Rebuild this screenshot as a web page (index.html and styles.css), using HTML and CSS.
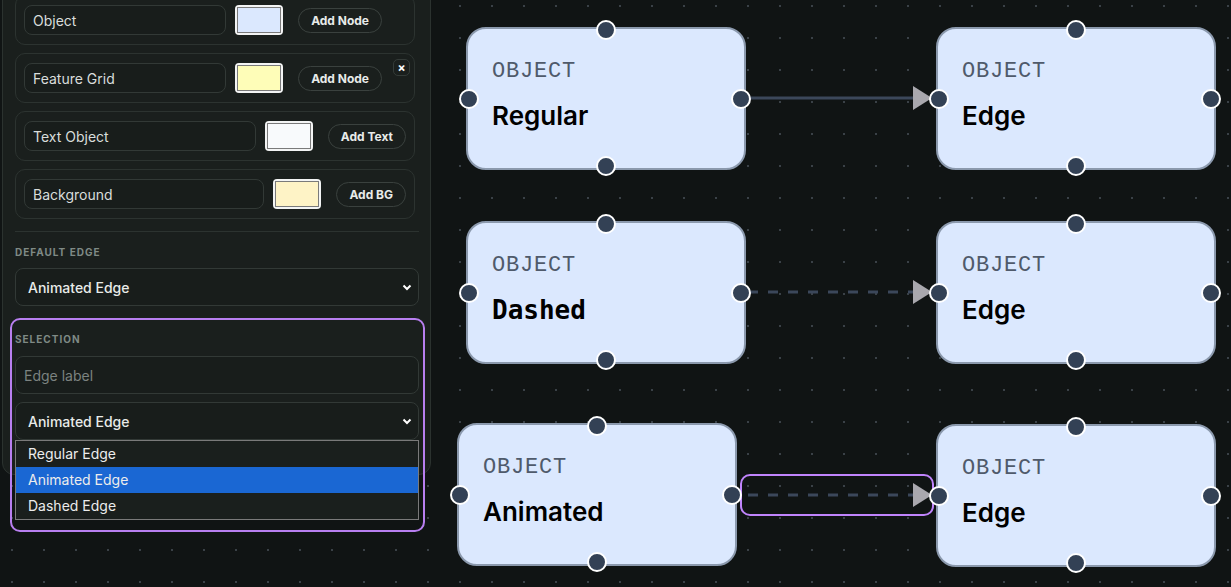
FILE: index.html
```html
<!DOCTYPE html>
<html lang="en">
<head>
    <meta charset="UTF-8">
    <meta name="viewport" content="width=device-width, initial-scale=1.0">
    <title>Flow editor</title>
    <link rel="stylesheet" href="styles.css">
</head>
<body>
    <div class="canvas">
        <svg class="edges" width="1231" height="587" viewBox="0 0 1231 587">
            <!-- regular -->
            <path class="edge" d="M741 98 L916 98"/>
            <polygon class="arrow" points="913,86 932,98 913,110"/>
            <!-- dashed -->
            <path class="edge edge--dashed" d="M748 292 L916 292"/>
            <polygon class="arrow" points="913,280 932,292 913,304"/>
            <!-- animated (selected) -->
            <path class="edge edge--dashed" d="M748 495 L916 495"/>
            <polygon class="arrow" points="913,483 932,495 913,507"/>
            <rect class="edge-selected" x="741" y="475" width="192" height="40" rx="9"/>
        </svg>

        <div class="node n1">
            <div class="node-kind">OBJECT</div>
            <div class="node-title">Regular</div>
            <span class="handle handle--top"></span>
            <span class="handle handle--left"></span>
            <span class="handle handle--right"></span>
            <span class="handle handle--bottom"></span>
        </div>
        <div class="node n2">
            <div class="node-kind">OBJECT</div>
            <div class="node-title">Edge</div>
            <span class="handle handle--top"></span>
            <span class="handle handle--left"></span>
            <span class="handle handle--right"></span>
            <span class="handle handle--bottom"></span>
        </div>
        <div class="node n3">
            <div class="node-kind">OBJECT</div>
            <div class="node-title node-title--mono">Dashed</div>
            <span class="handle handle--top"></span>
            <span class="handle handle--left"></span>
            <span class="handle handle--right"></span>
            <span class="handle handle--bottom"></span>
        </div>
        <div class="node n4">
            <div class="node-kind">OBJECT</div>
            <div class="node-title">Edge</div>
            <span class="handle handle--top"></span>
            <span class="handle handle--left"></span>
            <span class="handle handle--right"></span>
            <span class="handle handle--bottom"></span>
        </div>
        <div class="node n5">
            <div class="node-kind">OBJECT</div>
            <div class="node-title">Animated</div>
            <span class="handle handle--top"></span>
            <span class="handle handle--left"></span>
            <span class="handle handle--right"></span>
            <span class="handle handle--bottom"></span>
        </div>
        <div class="node n6">
            <div class="node-kind">OBJECT</div>
            <div class="node-title">Edge</div>
            <span class="handle handle--top"></span>
            <span class="handle handle--left"></span>
            <span class="handle handle--right"></span>
            <span class="handle handle--bottom"></span>
        </div>

        <aside class="panel">
            <div class="cards">
                <div class="card card--node">
                    <input class="field" type="text" value="Object">
                    <div class="swatch"><span class="swatch-blue"></span></div>
                    <button class="add-btn">Add Node</button>
                </div>
                <div class="card card--node">
                    <input class="field" type="text" value="Feature Grid">
                    <div class="swatch"><span class="swatch-yellow"></span></div>
                    <button class="add-btn">Add Node</button>
                    <button class="close-btn">×</button>
                </div>
                <div class="card">
                    <input class="field" type="text" value="Text Object">
                    <div class="swatch"><span class="swatch-white"></span></div>
                    <button class="add-btn">Add Text</button>
                </div>
                <div class="card">
                    <input class="field" type="text" value="Background">
                    <div class="swatch"><span class="swatch-cream"></span></div>
                    <button class="add-btn">Add BG</button>
                </div>
            </div>

            <div class="divider"></div>

            <div class="section-label">Default edge</div>
            <div class="select">
                <span>Animated Edge</span>
                <svg class="chevron" width="10" height="7" viewBox="0 0 10 7"><path d="M1.5 1.5 L5 5 L8.5 1.5"/></svg>
            </div>

            <div class="selection">
                <div class="section-label">Selection</div>
                <input class="field field--tall" type="text" placeholder="Edge label">
                <div class="select select--spaced">
                    <span>Animated Edge</span>
                    <svg class="chevron" width="10" height="7" viewBox="0 0 10 7"><path d="M1.5 1.5 L5 5 L8.5 1.5"/></svg>
                </div>
                <div class="options">
                    <div class="option">Regular Edge</div>
                    <div class="option option--active">Animated Edge</div>
                    <div class="option">Dashed Edge</div>
                </div>
            </div>
        </aside>
    </div>
</body>
</html>
```

FILE: styles.css
```css
/* Base */
body {
    margin: 0;
    width: 1231px;
    height: 587px;
    overflow: hidden;
    background: #101414;
    font-family: Inter, "Noto Sans", sans-serif;
    color: #e6e9e7;
}

.canvas {
    position: relative;
    width: 1231px;
    height: 587px;
    background-image: radial-gradient(circle, #3a4147 1px, transparent 1.5px);
    background-size: 32px 32px;
    background-position: -4px -10px;
}

/* Edges */
.edges {
    position: absolute;
    left: 0;
    top: 0;
}
.edge {
    fill: none;
    stroke: #3b475a;
    stroke-width: 3;
}
.edge--dashed {
    stroke-dasharray: 10 10;
}
.arrow {
    fill: #a9a8ae;
}
.edge-selected {
    fill: none;
    stroke: #c084fc;
    stroke-width: 2;
}

/* Nodes */
.node {
    position: absolute;
    width: 280px;
    height: 143px;
    box-sizing: border-box;
    border: 2px solid #8b99ad;
    border-radius: 20px;
    background: #dbe8fe;
    padding: 31px 24px 0;
}
.n1 { left: 466px; top: 27px; }
.n2 { left: 936px; top: 27px; }
.n3 { left: 466px; top: 221px; }
.n4 { left: 936px; top: 221px; }
.n5 { left: 457px; top: 423px; }
.n6 { left: 936px; top: 424px; }

.node-kind {
    font-family: "Liberation Mono", monospace;
    font-size: 22px;
    line-height: 24px;
    letter-spacing: 0.8px;
    color: #4f5a6b;
}
.node-title {
    margin-top: 16px;
    font-size: 26px;
    line-height: 32px;
    font-weight: 600;
    color: #000;
}
.node-title--mono {
    font-family: "DejaVu Sans Mono", monospace;
    font-weight: bold;
    font-size: 26px;
}

.handle {
    position: absolute;
    width: 20px;
    height: 20px;
    box-sizing: border-box;
    border-radius: 50%;
    background: #334155;
    border: 2px solid #fff;
}
.handle--top { top: -9px; left: calc(50% - 10px); }
.handle--bottom { bottom: -8px; left: calc(50% - 10px); }
.handle--left { left: -9px; top: calc(50% - 10px); }
.handle--right { right: -7px; top: calc(50% - 10px); }

/* Side panel */
.panel {
    position: absolute;
    left: 2px;
    top: -20px;
    width: 429px;
    height: 495px;
    box-sizing: border-box;
    background: #1a1f1d;
    border: 1px solid #2b322f;
    border-radius: 12px;
    padding: 14px 11px 0 12px;
}
.cards {
    display: flex;
    flex-direction: column;
    gap: 8px;
}
.card {
    position: relative;
    display: flex;
    align-items: center;
    width: 400px;
    height: 50px;
    box-sizing: border-box;
    padding: 0 8px;
    border: 1px solid #2c3330;
    border-radius: 10px;
}
.card--node {
    padding-right: 32px;
}
.field {
    flex: 1;
    min-width: 0;
    height: 30px;
    box-sizing: border-box;
    padding: 0 8px;
    border: 1px solid #323936;
    border-radius: 8px;
    background: #181d1b;
    color: #d9dddb;
    font-family: Inter, "Noto Sans", sans-serif;
    font-size: 14px;
    outline: none;
}
.field::placeholder {
    color: #7c8380;
}
.field--tall {
    display: block;
    width: 100%;
    height: 38px;
}
.swatch {
    width: 48px;
    height: 30px;
    margin-left: 9px;
    box-sizing: border-box;
    padding: 2px;
    background: #f3f4f4;
    border-radius: 4px;
    flex-shrink: 0;
}
.swatch span {
    display: block;
    height: 100%;
    box-sizing: border-box;
    border: 1px solid #7a7a7a;
}
.swatch-blue { background: #dbe8fe; }
.swatch-yellow { background: #fefdb8; }
.swatch-white { background: #f8fafc; }
.swatch-cream { background: #fef3c6; }

.add-btn {
    margin-left: 15px;
    height: 25px;
    padding: 0 12px;
    border: 1px solid #3a413e;
    border-radius: 13px;
    background: transparent;
    color: #e8ebe9;
    font-family: Inter, "Noto Sans", sans-serif;
    font-size: 12px;
    font-weight: 700;
    flex-shrink: 0;
}
.close-btn {
    position: absolute;
    top: 5px;
    right: 4px;
    width: 17px;
    height: 17px;
    padding: 0;
    border: 1px solid #343b38;
    border-radius: 5px;
    background: transparent;
    color: #fff;
    font-family: Inter, sans-serif;
    font-size: 12px;
    font-weight: 700;
    line-height: 13px;
}

.divider {
    height: 1px;
    background: #2c3330;
    margin-top: 12px;
}
.section-label {
    margin: 13px 0 9px;
    font-size: 10px;
    line-height: 14px;
    font-weight: 700;
    letter-spacing: 1px;
    text-transform: uppercase;
    color: #7f8a85;
}
.select {
    display: flex;
    align-items: center;
    justify-content: space-between;
    height: 38px;
    box-sizing: border-box;
    padding: 0 6px 0 12px;
    border: 1px solid #323936;
    border-radius: 8px;
    background: #181d1b;
    font-size: 14px;
    font-weight: 500;
    color: #e8ebe9;
}
.select--spaced {
    margin-top: 8px;
}
.chevron path {
    fill: none;
    stroke: #fff;
    stroke-width: 2;
}

/* Selection box */
.selection {
    margin: 12px -6px 0 -5px;
    padding: 12px 4px 10px 3px;
    border: 2px solid #b87ff0;
    border-radius: 10px;
}
.selection .section-label {
    margin: 0 0 10px;
}
.options {
    border: 1px solid #7a7a7a;
    background: #1a1f1d;
}
.option {
    height: 26px;
    line-height: 26px;
    padding-left: 12px;
    font-size: 14px;
    color: #ececec;
}
.option--active {
    background: #1a67d3;
}
```
